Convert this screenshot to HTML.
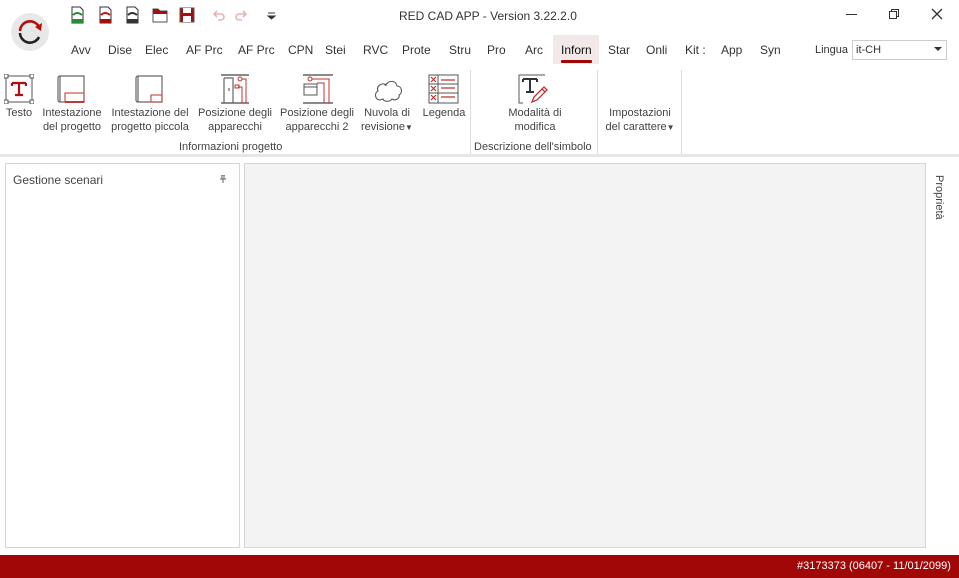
<!DOCTYPE html>
<html><head><meta charset="utf-8"><style>
*{margin:0;padding:0;box-sizing:border-box}
body{width:959px;height:578px;background:#fff;font-family:"Liberation Sans",sans-serif;font-size:11px;color:#333;position:relative;overflow:hidden}
.a{position:absolute;white-space:nowrap}
.tab{position:absolute;top:43px;font-size:12px;color:#333}
.lbl{position:absolute;text-align:center;font-size:11px;line-height:14px;color:#444}
.grp{position:absolute;top:141px;font-size:11px;color:#444}
.sep{position:absolute;top:70px;width:1px;height:85px;background:#ddd}
svg{position:absolute}
</style></head><body>
<svg style="left:10px;top:12px" width="40" height="40" viewBox="0 0 40 40">
<circle cx="20" cy="20" r="19" fill="#e8e8e8"/>
<path d="M10 19 A10 10 0 0 1 29 15" fill="none" stroke="#b01010" stroke-width="2.6"/>
<path d="M25 15 L31 19 L32 11 Z" fill="#b01010"/>
<path d="M10 21 A10 10 0 0 0 29 25" fill="none" stroke="#222" stroke-width="2.6"/>
</svg>
<svg style="left:70px;top:6px" width="220" height="18" viewBox="0 0 220 18">
<g><path d="M2 1h8l3 3v13H2z" fill="#fff" stroke="#333"/><path d="M3 9 q4-4 9 0" stroke="#2a8a3a" stroke-width="2" fill="none"/><rect x="2" y="13" width="11" height="4" fill="#2a8a3a"/></g>
<g transform="translate(28,0)"><path d="M2 1h8l3 3v13H2z" fill="#fff" stroke="#333"/><path d="M3 9 q4-4 9 0" stroke="#c01818" stroke-width="2" fill="none"/><rect x="2" y="13" width="11" height="4" fill="#a01010"/></g>
<g transform="translate(55,0)"><path d="M2 1h8l3 3v13H2z" fill="#fff" stroke="#333"/><path d="M3 9 q4-4 9 0" stroke="#333" stroke-width="2" fill="none"/><rect x="2" y="13" width="11" height="4" fill="#333"/></g>
<g transform="translate(82,0)"><path d="M1 3h5l2 2h7v11H1z" fill="#fff" stroke="#555"/><path d="M1 3h5l2 2h7v3H1z" fill="#a01010"/></g>
<g transform="translate(109,0)"><rect x="1" y="2" width="14" height="14" fill="#a01010" stroke="#555"/><rect x="4" y="2" width="8" height="5" fill="#fff"/><rect x="4" y="10" width="8" height="6" fill="#fff"/></g>
<path d="M144 8 h7 a3 3 0 0 1 0 6 h-3 M147 5 l-3 3 3 3" stroke="#e5b5b5" stroke-width="1.6" fill="none"/>
<path d="M176 8 h-7 a3 3 0 0 0 0 6 h3 M173 5 l3 3 -3 3" stroke="#e5b5b5" stroke-width="1.6" fill="none"/>
<path d="M198 7h7M198 10h7l-3.5 3z" stroke="#333" fill="#333"/>
</svg>
<div class="a" style="left:399px;top:9px;font-size:12px;color:#333">RED CAD APP - Version 3.22.2.0</div>
<div class="a" style="left:846px;top:14px;width:11px;height:1px;background:#333"></div>
<svg style="left:888px;top:8px" width="12" height="12"><rect x="1.5" y="3.5" width="7" height="7" fill="none" stroke="#333"/><path d="M3.5 3.5V1.5h7v7h-2" fill="none" stroke="#333"/></svg>
<svg style="left:931px;top:8px" width="12" height="12"><path d="M1 1L11 11M11 1L1 11" stroke="#333" stroke-width="1.3"/></svg>
<div class="a" style="left:553px;top:35px;width:46px;height:29px;background:#f2e8e8"></div>
<div class="a" style="left:561px;top:60px;width:31px;height:3px;background:#a00808;border-radius:1px"></div>
<div class="tab" style="left:71px">Avv</div>
<div class="tab" style="left:108px">Dise</div>
<div class="tab" style="left:145px">Elec</div>
<div class="tab" style="left:186px">AF Prc</div>
<div class="tab" style="left:238px">AF Prc</div>
<div class="tab" style="left:288px">CPN</div>
<div class="tab" style="left:325px">Stei</div>
<div class="tab" style="left:363px">RVC</div>
<div class="tab" style="left:402px">Prote</div>
<div class="tab" style="left:449px">Stru</div>
<div class="tab" style="left:487px">Pro</div>
<div class="tab" style="left:525px">Arc</div>
<div class="tab" style="left:561px;color:#111;width:31px;overflow:hidden">Inforn</div>
<div class="tab" style="left:608px">Star</div>
<div class="tab" style="left:646px">Onli</div>
<div class="tab" style="left:685px">Kit :</div>
<div class="tab" style="left:721px">App</div>
<div class="tab" style="left:760px">Syn</div>
<div class="a" style="left:815px;top:44px;font-size:11px">Lingua</div>
<div class="a" style="left:852px;top:40px;width:95px;height:20px;border:1px solid #ccc;background:#fff;padding:3px 3px;font-size:11px">it-CH</div>
<svg style="left:934px;top:47px" width="8" height="5"><path d="M0 0h8L4 4z" fill="#333"/></svg>
<svg style="left:4px;top:74px" width="30" height="30" viewBox="0 0 30 30">
<rect x="2" y="2" width="26" height="26" fill="none" stroke="#555"/>
<rect x="0" y="0" width="4" height="4" fill="#fff" stroke="#555"/><rect x="26" y="0" width="4" height="4" fill="#fff" stroke="#555"/><rect x="0" y="26" width="4" height="4" fill="#fff" stroke="#555"/><rect x="26" y="26" width="4" height="4" fill="#fff" stroke="#555"/>
<path d="M8 9h14M8 9v3M22 9v3M15 9v12M11 21h8" stroke="#b01010" stroke-width="2.2" fill="none"/>
</svg>
<svg style="left:56px;top:74px" width="32" height="30" viewBox="0 0 32 30">
<path d="M4 2h24v26H4z M4 2a2 2 0 0 0-2 2v22a2 2 0 0 0 2 2" fill="none" stroke="#666" stroke-width="1.2"/>
<rect x="9" y="19" width="19" height="9" fill="none" stroke="#d05050" stroke-width="1.2"/><path d="M9 28h19" stroke="#b01010" stroke-width="1.5"/>
</svg>
<svg style="left:134px;top:74px" width="32" height="30" viewBox="0 0 32 30">
<path d="M4 2h24v26H4z M4 2a2 2 0 0 0-2 2v22a2 2 0 0 0 2 2" fill="none" stroke="#666" stroke-width="1.2"/>
<rect x="17" y="21" width="11" height="7" fill="none" stroke="#d05050" stroke-width="1.2"/>
</svg>
<svg style="left:220px;top:74px" width="30" height="30" viewBox="0 0 30 30">
<path d="M1 1h28" stroke="#444" stroke-width="1.2"/><path d="M1 29h28" stroke="#444" stroke-width="1.2"/>
<path d="M4 4v25M4 4h9v25" fill="none" stroke="#666" stroke-width="1.2"/><path d="M9 14v3" stroke="#444"/>
<circle cx="20" cy="5" r="2" fill="none" stroke="#c03030"/><path d="M22 5h4v24M18 13h4v16" fill="none" stroke="#c03030"/><rect x="15" y="11" width="4" height="3" fill="none" stroke="#c03030"/>
</svg>
<svg style="left:302px;top:74px" width="32" height="30" viewBox="0 0 32 30">
<path d="M1 1h30M1 29h30" stroke="#444" stroke-width="1.2"/>
<circle cx="8" cy="5" r="2" fill="none" stroke="#c03030"/><path d="M10 5h17v24M15 9h7v20" fill="none" stroke="#c03030"/>
<rect x="2" y="10" width="13" height="11" fill="none" stroke="#555"/><path d="M2 13h13" stroke="#555"/>
</svg>
<svg style="left:372px;top:74px" width="32" height="30" viewBox="0 0 32 30">
<path d="M8 26c-5 0-6-7-2-9-2-5 4-9 8-6 2-5 10-5 11 1 5 0 6 7 2 9 1 4-4 6-7 4-2 3-8 3-9 0z" fill="#fff" stroke="#555" stroke-width="1.1"/>
<path d="M13 12a4 4 0 0 1 3-3" stroke="#c03030" fill="none"/>
</svg>
<svg style="left:428px;top:74px" width="31" height="30" viewBox="0 0 31 30">
<rect x="1" y="1" width="29" height="28" fill="none" stroke="#555"/><path d="M1 10h29M1 19h29M10 1v28" stroke="#555"/>
<path d="M3 3l5 5M8 3l-5 5M3 12l5 5M8 12l-5 5M3 21l5 5M8 21l-5 5" stroke="#c03030" stroke-width="1.2"/>
<path d="M13 6h14M13 14h14M13 23h14" stroke="#c03030" stroke-width="1.3"/>
</svg>
<svg style="left:518px;top:74px" width="32" height="30" viewBox="0 0 32 30">
<path d="M27 1H1v28h4" fill="none" stroke="#555"/>
<path d="M5 5h14M5 5v3M19 5v3M12 5v13M8 18h8" stroke="#333" stroke-width="2" fill="none"/>
<path d="M14 28l2-5 10-10 3 3-10 10z M24 15l3 3" fill="none" stroke="#c03030" stroke-width="1.3"/>
</svg>
<div class="lbl" style="left:2px;top:106px;width:34px">Testo</div>
<div class="lbl" style="left:38px;top:106px;width:68px">Intestazione<br>del progetto</div>
<div class="lbl" style="left:106px;top:106px;width:88px">Intestazione del<br>progetto piccola</div>
<div class="lbl" style="left:195px;top:106px;width:80px">Posizione degli<br>apparecchi</div>
<div class="lbl" style="left:277px;top:106px;width:80px">Posizione degli<br>apparecchi 2</div>
<div class="lbl" style="left:357px;top:106px;width:60px">Nuvola di<br>revisione<span style="font-size:8px">▼</span></div>
<div class="lbl" style="left:419px;top:106px;width:50px">Legenda</div>
<div class="lbl" style="left:490px;top:106px;width:90px">Modalità di<br>modifica</div>
<div class="lbl" style="left:599px;top:106px;width:82px">Impostazioni<br>del carattere<span style="font-size:8px">▼</span></div>
<div class="grp" style="left:179px">Informazioni progetto</div>
<div class="grp" style="left:474px">Descrizione dell'simbolo</div>
<div class="sep" style="left:470px"></div>
<div class="sep" style="left:597px"></div>
<div class="sep" style="left:681px"></div>
<div class="a" style="left:0;top:154px;width:959px;height:3px;background:#e6e6e6"></div>
<div class="a" style="left:5px;top:163px;width:235px;height:385px;border:1px solid #d6d6d6;background:#fff"></div>
<div class="a" style="left:13px;top:173px;font-size:12px;color:#444">Gestione scenari</div>
<svg style="left:220px;top:175px" width="6" height="8"><path d="M1 0h4M2 0v4M4 0v4M0 4h6M3 4v4" stroke="#666" stroke-width="1"/></svg>
<div class="a" style="left:244px;top:163px;width:682px;height:385px;border:1px solid #d6d6d6;background:#f3f3f3"></div>
<div class="a" style="left:933px;top:175px;writing-mode:vertical-rl;font-size:11px;color:#444">Proprietà</div>
<div class="a" style="left:0;top:555px;width:959px;height:23px;background:#a00808"></div>
<div class="a" style="left:797px;top:560px;font-size:11px;color:#fff">#3173373 (06407 - 11/01/2099)</div>
</body></html>
